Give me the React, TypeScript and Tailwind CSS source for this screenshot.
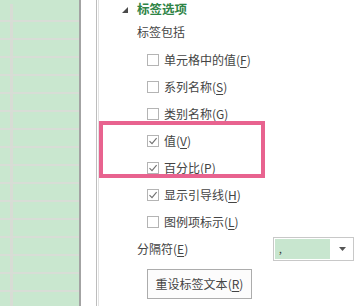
import React from 'react';

const rows = Array.from({ length: 17 });

type Opt = { label: string; key: string; checked: boolean };

const options: Opt[] = [
  { label: '单元格中的值', key: 'F', checked: false },
  { label: '系列名称', key: 'S', checked: false },
  { label: '类别名称', key: 'G', checked: false },
  { label: '值', key: 'V', checked: true },
  { label: '百分比', key: 'P', checked: true },
  { label: '显示引导线', key: 'H', checked: true },
  { label: '图例项标示', key: 'L', checked: false },
];

const Accel: React.FC<{ k: string }> = ({ k }) => (
  <span>
    (<span className="underline underline-offset-2">{k}</span>)
  </span>
);

const Check: React.FC<{ checked: boolean }> = ({ checked }) => (
  <div className="w-[12px] h-[12px] border border-[#b4b4b4] bg-white flex items-center justify-center">
    {checked && (
      <svg width="10" height="10" viewBox="0 0 10 10">
        <path d="M1.5 5.2 L4 7.6 L8.6 2.2" fill="none" stroke="#6f6f6f" strokeWidth="1.1" />
      </svg>
    )}
  </div>
);

export default function App() {
  return (
    <div
      className="relative w-[359px] h-[306px] overflow-hidden bg-white flex text-[12px] text-[#444]"
      style={{ fontFamily: '"Noto Sans CJK SC", "Noto Sans", sans-serif' }}
    >
      {/* sheet cells */}
      <div className="w-[79px] h-full bg-[#c9e7cf] flex flex-col pt-[4px]">
        {rows.map((_, i) => (
          <div key={i} className="h-[18px] shrink-0 flex border-b-2 border-[#d8ddd6]">
            <div className="w-[13px] border-r-[3px] border-[#d8dcd5]" />
            <div className="flex-1" />
          </div>
        ))}
      </div>
      <div className="w-[2px] h-full bg-[#a3a3a3]" />
      <div className="w-[15px] h-full bg-white" />
      <div className="w-[1px] h-full bg-[#bdbdbd]" />
      <div className="w-[1px] h-full bg-white" />
      <div className="w-[1px] h-full bg-[#e2e2e2]" />

      {/* pane */}
      <div className="flex-1 flex flex-col">
        <div className="h-[18px] flex items-center pl-[23px]">
          <svg width="6" height="6" viewBox="0 0 6 6" className="mt-[2px]">
            <path d="M6 0 L6 6 L0 6 Z" fill="#4a4a4a" />
          </svg>
          <span className="ml-[9px] text-[#2f8446] font-bold text-[12.5px]">标签选项</span>
        </div>
        <div className="h-[28px] flex items-center pl-[38px]">标签包括</div>
        {options.map((o) => (
          <div key={o.key} className="h-[27px] flex items-center pl-[48px]">
            <Check checked={o.checked} />
            <span className="ml-[5px]">
              {o.label}
              <Accel k={o.key} />
            </span>
          </div>
        ))}
        <div className="h-[27px] flex items-center pl-[38px] pr-[5px]">
          <span>
            分隔符<Accel k="E" />
          </span>
          <div className="ml-auto w-[81px] h-[24px] border border-[#c8c8c8] bg-white flex items-center p-[1px]">
            <div className="w-[55px] h-full bg-[#c8e6cf] flex items-center pl-[4px] text-[10px] leading-none text-[#333]">
              ,
            </div>
            <div className="flex-1 flex items-center justify-end pr-[6px]">
              <svg width="7" height="4" viewBox="0 0 7 4">
                <path d="M0 0 L7 0 L3.5 4 Z" fill="#555" />
              </svg>
            </div>
          </div>
        </div>
        <div className="pl-[48px] mt-[7px]">
          <div className="w-[105px] h-[30px] border border-[#acacac] bg-[#fcfcfc] flex items-center justify-center">
            重设标签文本<Accel k="R" />
          </div>
        </div>
      </div>

      {/* highlight */}
      <div className="absolute left-[99px] top-[121px] w-[166px] h-[57px] border-4 border-[#e8638f]" />
    </div>
  );
}
